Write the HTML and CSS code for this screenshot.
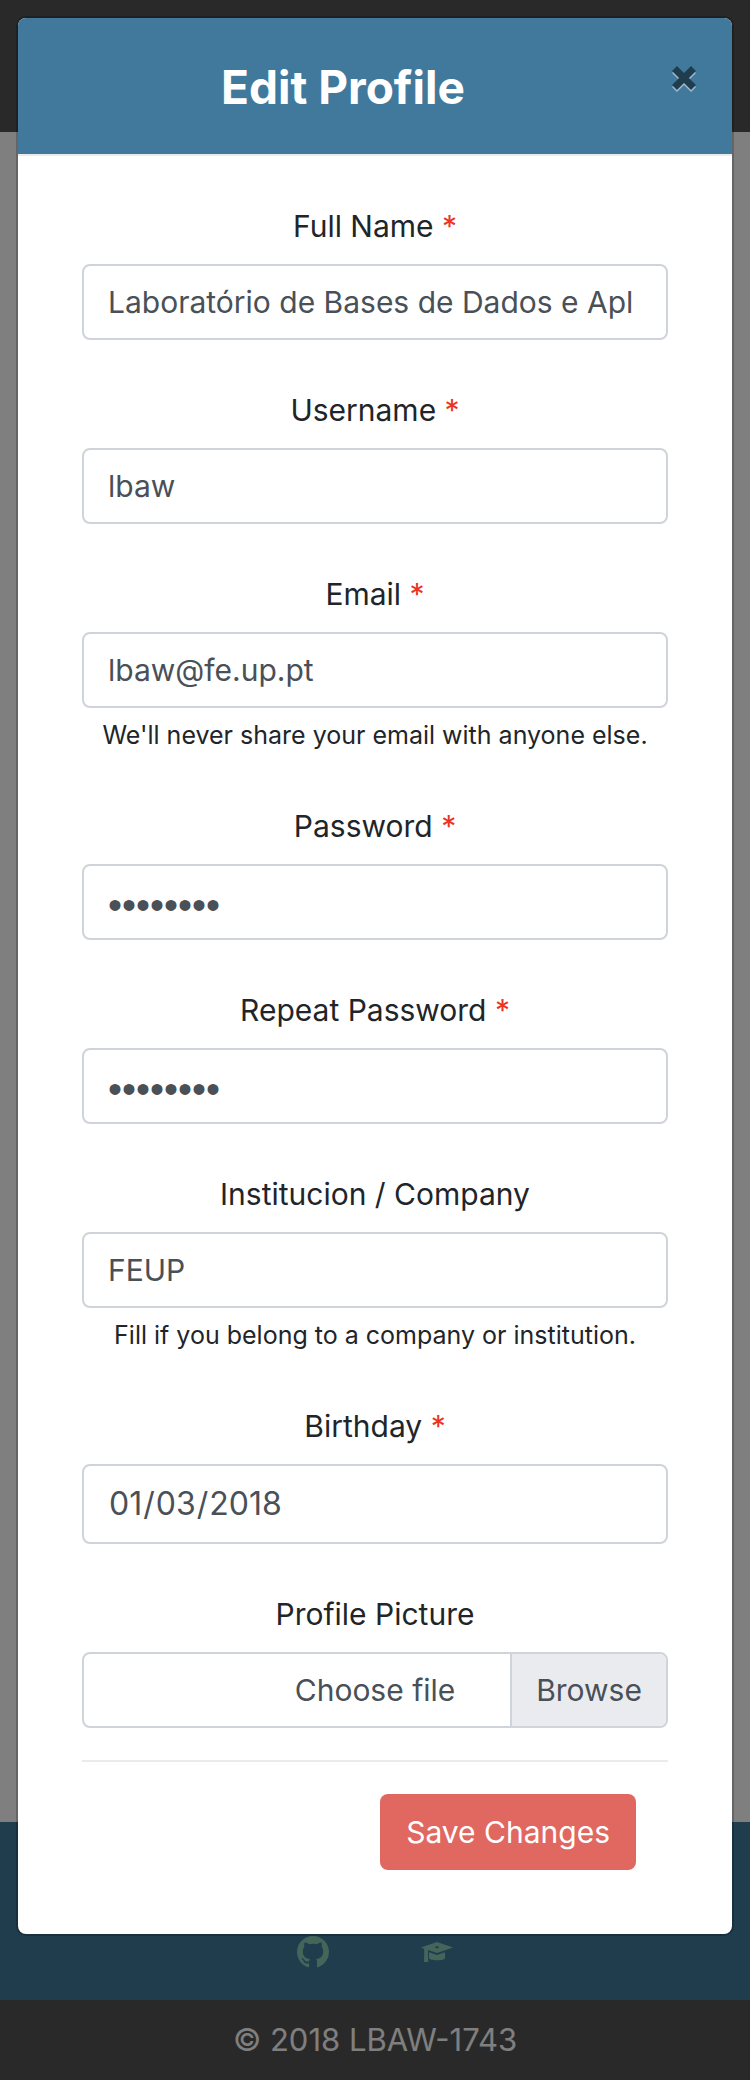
FILE: index.html
```html
<!DOCTYPE html>
<html lang="en">
<head>
<meta charset="utf-8">
<meta name="viewport" content="width=device-width, initial-scale=1">
<title>Edit Profile</title>
<link rel="stylesheet" href="styles.css">
</head>
<body>
<div class="screen">
  <div class="page">
    <header class="navbar"></header>
    <main class="content"></main>
    <footer class="footer">
      <div class="footer-links">
        <a class="footer-link" href="#" aria-label="GitHub">
          <svg viewBox="0 0 16 16" width="32" height="32" fill="currentColor" aria-hidden="true"><path d="M8 0C3.58 0 0 3.58 0 8c0 3.54 2.29 6.53 5.47 7.59.4.07.55-.17.55-.38 0-.19-.01-.82-.01-1.49-2.01.37-2.53-.49-2.69-.94-.09-.23-.48-.94-.82-1.13-.28-.15-.68-.52-.01-.53.63-.01 1.08.58 1.23.82.72 1.21 1.87.87 2.33.66.07-.52.28-.87.51-1.07-1.78-.2-3.64-.89-3.64-3.95 0-.87.31-1.59.82-2.15-.08-.2-.36-1.02.08-2.12 0 0 .67-.21 2.2.82.64-.18 1.32-.27 2-.27s1.36.09 2 .27c1.53-1.04 2.2-.82 2.2-.82.44 1.1.16 1.92.08 2.12.51.56.82 1.27.82 2.15 0 3.07-1.87 3.75-3.65 3.95.29.25.54.73.54 1.48 0 1.07-.01 1.93-.01 2.2 0 .21.15.46.55.38A8.01 8.01 0 0 0 16 8c0-4.42-3.58-8-8-8z"/></svg>
        </a>
        <a class="footer-link" href="#" aria-label="University">
          <svg viewBox="0 0 32 32" width="32" height="32" fill="currentColor" aria-hidden="true"><path fill-rule="evenodd" d="M16 6 32 11.500 16 17 7 14V19.500L7.200 26H3L3.200 19V12.700L0 11.500ZM14 11.200a2 1 0 1 0 4 0a2 1 0 1 0-4 0Z"/><path d="M8 16.200 16 19 24 16.200V22C24 25 8 25 8 22Z"/></svg>
        </a>
      </div>
      <p class="copyright">© 2018 LBAW-1743</p>
    </footer>
  </div>
  <div class="backdrop">
    <section class="modal" role="dialog" aria-labelledby="modal-title">
      <header class="modal-header">
        <h1 class="modal-title" id="modal-title">Edit Profile</h1>
        <button class="close" type="button" aria-label="Close">
          <svg viewBox="0 0 28 28" width="28" height="28" fill="none" stroke-width="7" aria-hidden="true"><path class="close-shadow" d="M4.500 6.500 23.500 25.500M23.500 6.500 4.500 25.500"/><path class="close-mark" d="M4.500 4.500 23.500 23.500M23.500 4.500 4.500 23.500"/></svg>
        </button>
      </header>
      <form class="form">
        <div class="field">
          <label class="label" for="name">Full Name <span class="required">*</span></label>
          <input class="control" id="name" type="text" value="Laboratório de Bases de Dados e Apl">
        </div>
        <div class="field">
          <label class="label" for="username">Username <span class="required">*</span></label>
          <input class="control" id="username" type="text" value="lbaw">
        </div>
        <div class="field">
          <label class="label" for="email">Email <span class="required">*</span></label>
          <input class="control" id="email" type="email" value="lbaw@fe.up.pt" aria-describedby="email-help">
          <small class="help" id="email-help">We'll never share your email with anyone else.</small>
        </div>
        <div class="field">
          <label class="label" for="password">Password <span class="required">*</span></label>
          <input class="control control-password" id="password" type="password" value="password">
        </div>
        <div class="field">
          <label class="label" for="repeat">Repeat Password <span class="required">*</span></label>
          <input class="control control-password" id="repeat" type="password" value="password">
        </div>
        <div class="field">
          <label class="label" for="company">Institucion / Company</label>
          <input class="control" id="company" type="text" value="FEUP" aria-describedby="company-help">
          <small class="help" id="company-help">Fill if you belong to a company or institution.</small>
        </div>
        <div class="field">
          <label class="label" for="birthday">Birthday <span class="required">*</span></label>
          <input class="control control-date" id="birthday" type="date" value="2018-01-03">
        </div>
        <div class="field">
          <label class="label" for="picture">Profile Picture</label>
          <div class="file">
            <input class="file-input" id="picture" type="file">
            <span class="file-name">Choose file</span>
            <span class="file-button">Browse</span>
          </div>
        </div>
        <div class="actions">
          <button class="save" type="submit">Save Changes</button>
        </div>
      </form>
    </section>
  </div>
</div>
</body>
</html>
```
FILE: styles.css
```css
* {
  box-sizing: border-box;
}

body {
  margin: 0;
  font-family: Inter, "Liberation Sans", sans-serif;
  font-size: 30px;
  line-height: 48px;
  color: #212529;
}

/* The page and the dialog share one grid cell */
.screen {
  display: grid;
  min-height: 100vh;
}

.page,
.backdrop {
  grid-area: 1 / 1;
  min-width: 0;
}

.page {
  display: flex;
  flex-direction: column;
  background: #fff;
}

.navbar {
  height: 132px;
  background: #525252;
}

.content {
  flex: 1;
}

.footer {
  background: #407a9c;
  text-align: center;
}

.footer-links {
  display: flex;
  justify-content: center;
  gap: 92px;
  padding: 114px 0 32px;
}

.footer-link {
  display: flex;
  color: #8acab6;
}

.copyright {
  margin: 0;
  padding: 16px;
  background: #525252;
  font-size: 31px;
  color: #fff;
}

.backdrop {
  z-index: 1;
  padding: 18px;
  background: rgba(0, 0, 0, 0.5);
}

.modal {
  overflow: hidden;
  border-radius: 8px;
  background: #fff;
  box-shadow: 0 0 0 2px rgba(0, 0, 0, 0.2);
}

.modal-header {
  display: flex;
  align-items: flex-start;
  padding: 32px 0 30px 32px;
  border-bottom: 2px solid #e9ebef;
  background: #41799c;
}

.modal-title {
  flex: 1;
  margin: 0;
  font-size: 46px;
  font-weight: 700;
  line-height: 74px;
  text-align: center;
  color: #fff;
}

.close {
  display: flex;
  align-items: center;
  justify-content: center;
  width: 96px;
  height: 56px;
  padding: 0;
  border: 0;
  background: none;
}

.close-shadow {
  stroke: #a0bcce;
}

.close-mark {
  stroke: #203d4e;
}

.form {
  display: flex;
  flex-direction: column;
  gap: 46px;
  padding: 46px 64px 64px;
}

.field {
  display: flex;
  flex-direction: column;
}

.label {
  margin-bottom: 14px;
  text-align: center;
}

.required {
  color: #eb3323;
}

.control {
  width: 100%;
  height: 76px;
  padding: 12px 24px;
  border: 2px solid #ced4da;
  border-radius: 8px;
  background: #fff;
  font: inherit;
  color: #495057;
}

.control-password {
  padding-top: 16px;
  padding-bottom: 10px;
  font-family: "Liberation Sans", sans-serif;
  font-size: 40px;
}

.control-date {
  height: 80px;
  font-size: 32px;
}

.control-date::-webkit-calendar-picker-indicator {
  display: none;
}

.help {
  margin: 8px 0 2px;
  font-size: 25px;
  line-height: 38px;
  text-align: center;
}

.file {
  position: relative;
  display: flex;
  overflow: hidden;
  height: 76px;
  border: 2px solid #ced4da;
  border-radius: 8px;
  line-height: 72px;
  text-align: center;
  color: #495057;
}

.file-input {
  position: absolute;
  inset: 0;
  width: 100%;
  opacity: 0;
}

.file-name {
  flex: 1;
  padding-left: 156px;
}

.file-button {
  width: 156px;
  border-left: 2px solid #ced4da;
  background: #e9ebef;
}

.actions {
  display: flex;
  justify-content: flex-end;
  margin-top: -14px;
  padding: 32px 32px 0;
  border-top: 2px solid #e9ebef;
}

.save {
  height: 76px;
  padding: 0 26px;
  border: 0;
  border-radius: 8px;
  background: #e16860;
  font: inherit;
  color: #fff;
}
```
